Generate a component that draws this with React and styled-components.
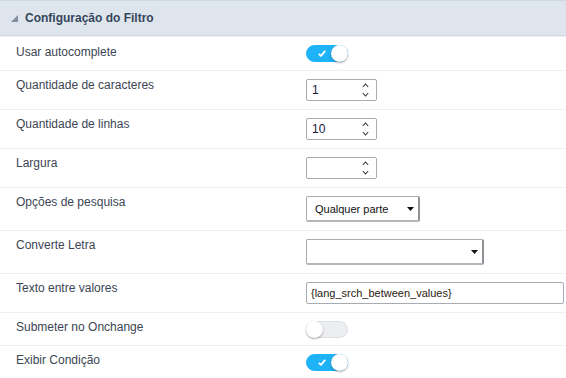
import styled, { createGlobalStyle } from "styled-components";

const GlobalStyle = createGlobalStyle`
  html, body {
    margin: 0;
    padding: 0;
    background: #fff;
  }
  body {
    font-family: "Liberation Sans", Arial, sans-serif;
  }
`;

const Panel = styled.section`
  width: 566px;
  border-bottom: 1px solid #d3d9e0;
`;

const Header = styled.div`
  display: flex;
  align-items: center;
  gap: 6px;
  height: 34px;
  padding-left: 10px;
  background: #dfe5ec;
  border-top: 1px solid #d0d8e0;
  border-bottom: 1px solid #d0d8e0;
  font-size: 12px;
  font-weight: bold;
  color: #34465b;
`;

const Row = styled.div`
  display: grid;
  grid-template-columns: 290px 1fr;
  align-items: start;
  padding: 8px 2px ${(p) => (p.$tight ? "7px" : "8px")} 16px;
  border-top: 1px solid #eef0f3;
  &:first-of-type {
    border-top: none;
  }
`;

const Label = styled.div`
  font-size: 12px;
  line-height: 14px;
  color: #3b4554;
  margin-top: ${(p) => p.$offset ?? -1}px;
`;

const Switch = styled.div`
  position: relative;
  width: 42px;
  height: 17px;
  border-radius: 9px;
  box-sizing: border-box;
  background: ${(p) => (p.$on ? "#1eb2f6" : "#eceef1")};
  border: 1px solid ${(p) => (p.$on ? "#1eb2f6" : "#dcdfe3")};
`;

const Knob = styled.span`
  position: absolute;
  top: -1px;
  ${(p) => (p.$on ? "right: -1px;" : "left: -1px;")}
  width: 17px;
  height: 17px;
  border-radius: 50%;
  background: #fff;
  box-shadow: 0 1px 2px rgba(0, 0, 0, 0.35);
`;

const Check = styled.svg`
  position: absolute;
  left: 11px;
  top: 4px;
`;

const NumberBox = styled.div`
  display: flex;
  align-items: center;
  justify-content: space-between;
  width: 71px;
  height: 22px;
  box-sizing: border-box;
  border: 1px solid #a7abb2;
  border-radius: 2px;
  padding: 0 7px 0 5px;
  font-size: 12px;
  color: #141a3c;
`;

const SelectBox = styled.div`
  display: flex;
  align-items: center;
  justify-content: space-between;
  width: ${(p) => p.$w}px;
  height: 26px;
  box-sizing: border-box;
  border: 1px solid #a9adb3;
  border-right: 2px solid #8e9296;
  border-bottom: 2px solid #b3b6ba;
  border-radius: 2px;
  padding: 0 4px 0 8px;
  font-size: 11px;
  color: #111;
`;

const TextBox = styled.div`
  display: flex;
  align-items: center;
  height: 22px;
  box-sizing: border-box;
  border: 1px solid #a7abb2;
  border-radius: 2px;
  padding: 0 4px;
  font-size: 11px;
  color: #2a2010;
`;

const Toggle = ({ on }) => (
  <Switch $on={on}>
    {on && (
      <Check width="8" height="7" viewBox="0 0 8 7">
        <path d="M0.8 3.8 L3 5.8 L7.2 0.8" fill="none" stroke="#fff" strokeWidth="1.8" />
      </Check>
    )}
    <Knob $on={on} />
  </Switch>
);

const Spinner = () => (
  <svg width="7" height="16" viewBox="0 0 7 16">
    <path d="M0.8 5 L3.5 2 L6.2 5" fill="none" stroke="#333" strokeWidth="1.1" />
    <path d="M0.8 11 L3.5 14 L6.2 11" fill="none" stroke="#333" strokeWidth="1.1" />
  </svg>
);

const Caret = () => (
  <svg width="7" height="4" viewBox="0 0 7 4">
    <path d="M0 0 H7 L3.5 4 Z" fill="#111" />
  </svg>
);

const App = () => {
  return (
    <>
      <GlobalStyle />
      <Panel>
        <Header>
          <svg width="9" height="9" viewBox="0 0 9 9">
            <path d="M8 1 V8 H1 Z" fill="#838f9c" />
          </svg>
          Configuração do Filtro
        </Header>
        <Row>
          <Label $offset={0}>Usar autocomplete</Label>
          <Toggle on />
        </Row>
        <Row>
          <Label>Quantidade de caracteres</Label>
          <NumberBox>
            1
            <Spinner />
          </NumberBox>
        </Row>
        <Row>
          <Label>Quantidade de linhas</Label>
          <NumberBox>
            10
            <Spinner />
          </NumberBox>
        </Row>
        <Row>
          <Label>Largura</Label>
          <NumberBox>
            <span />
            <Spinner />
          </NumberBox>
        </Row>
        <Row>
          <Label>Opções de pesquisa</Label>
          <SelectBox $w={114}>
            Qualquer parte
            <Caret />
          </SelectBox>
        </Row>
        <Row>
          <Label>Converte Letra</Label>
          <SelectBox $w={178}>
            <span />
            <Caret />
          </SelectBox>
        </Row>
        <Row>
          <Label>Texto entre valores</Label>
          <TextBox>{"{lang_srch_between_values}"}</TextBox>
        </Row>
        <Row $tight>
          <Label>Submeter no Onchange</Label>
          <Toggle />
        </Row>
        <Row $tight>
          <Label>Exibir Condição</Label>
          <Toggle on />
        </Row>
      </Panel>
    </>
  );
};

export default App;
